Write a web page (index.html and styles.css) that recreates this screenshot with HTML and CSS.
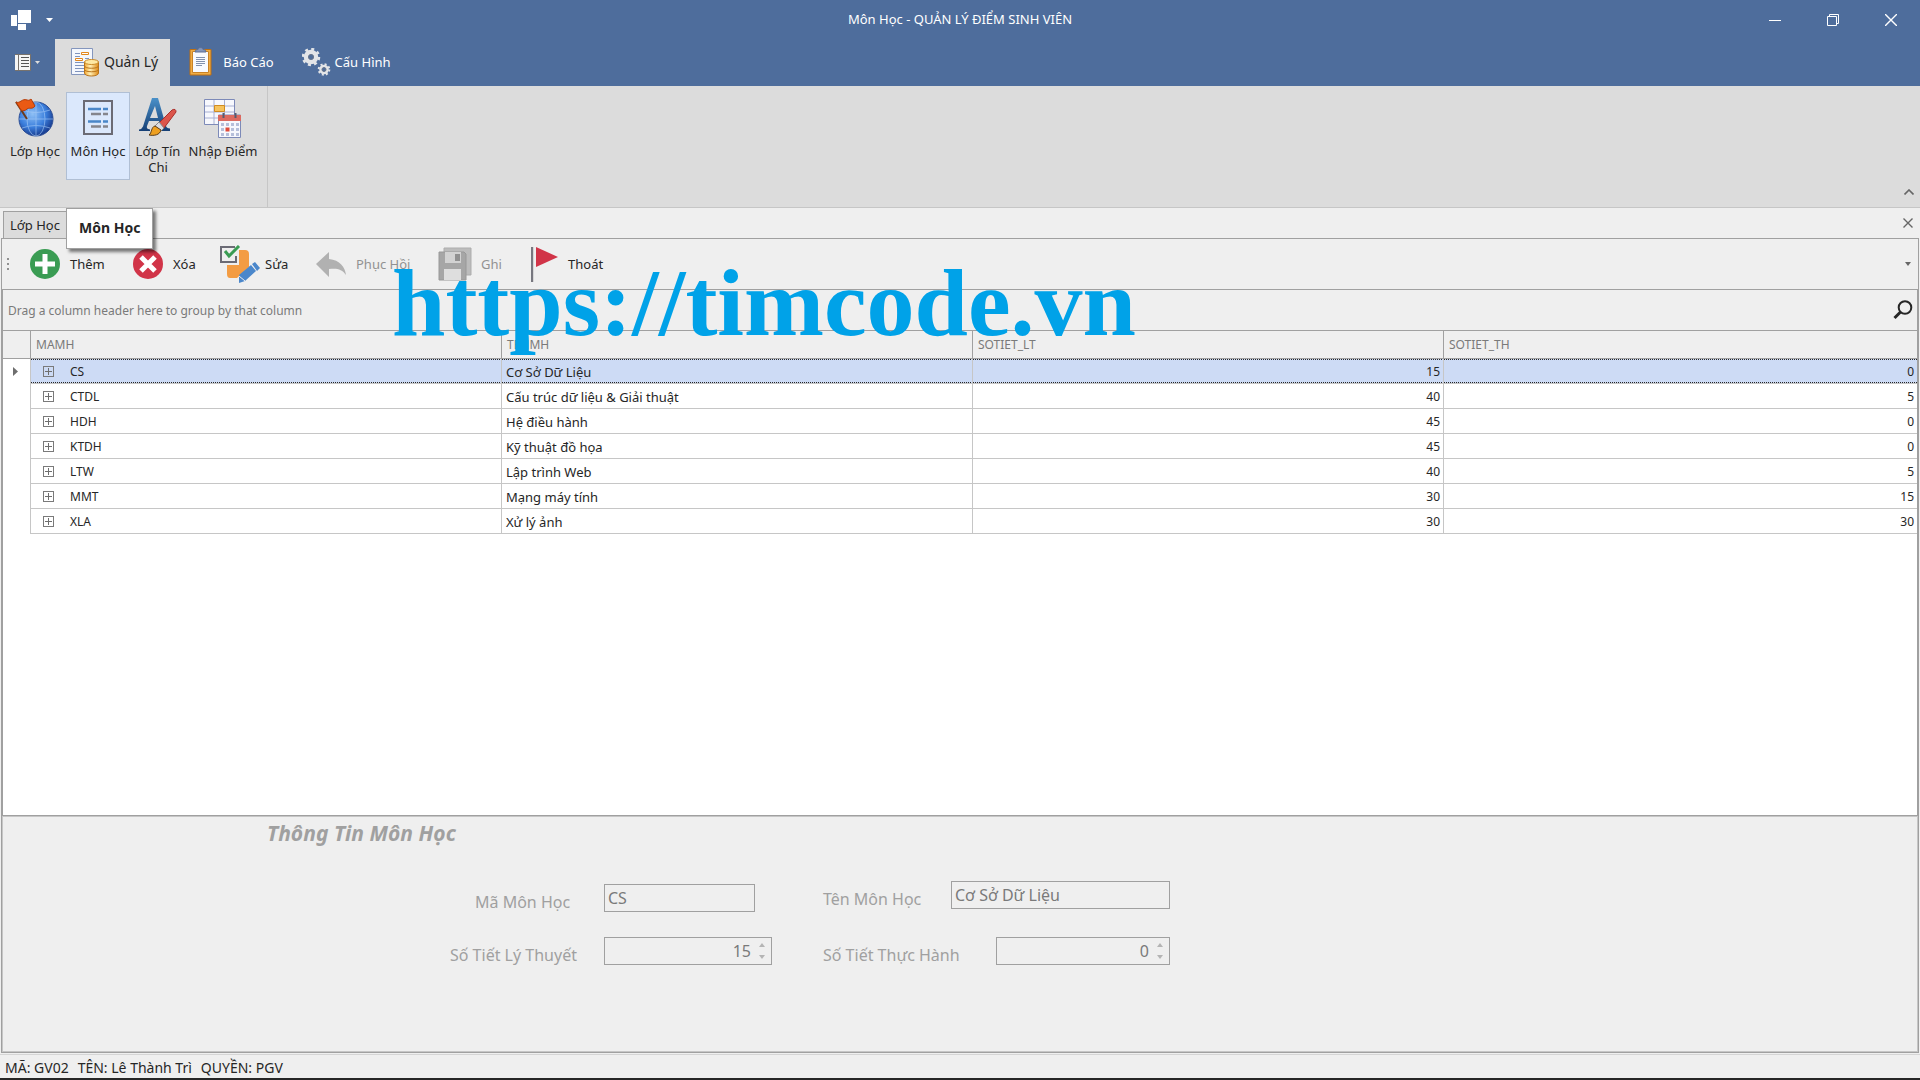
FILE: index.html
```html
<!DOCTYPE html>
<html lang="vi">
<head>
    <meta charset="UTF-8">
    <meta name="viewport" content="width=device-width, initial-scale=1.0">
    <title>Môn Học - QUẢN LÝ ĐIỂM SINH VIÊN</title>
    <link rel="stylesheet" href="styles.css">
</head>
<body>
    <!-- Title bar -->
    <header class="titlebar">
        <div class="quick-access">
            <svg class="app-logo" width="20" height="20" viewBox="0 0 20 20" fill="#fff"><path d="M0 5h6v11H0zM7 0h13v13H7zM7 14h8v6H7z"/></svg>
            <button type="button" class="icon-btn" aria-label="Customize"><svg width="7" height="4" viewBox="0 0 7 4"><path d="M0 0h7L3.500 4z" fill="#fff"/></svg></button>
        </div>
        <h1 class="window-title">Môn Học - QUẢN LÝ ĐIỂM SINH VIÊN</h1>
        <div class="window-controls">
            <button type="button" aria-label="Minimize"><svg width="12" height="12" viewBox="0 0 12 12"><path d="M0 6.500h12" stroke="#fff"/></svg></button>
            <button type="button" aria-label="Restore"><svg width="12" height="12" viewBox="0 0 12 12" fill="none" stroke="#fff"><path d="M.5 2.500h9v9h-9zM2.500 2V.5h9v9H10"/></svg></button>
            <button type="button" aria-label="Close"><svg width="12" height="12" viewBox="0 0 12 12"><path d="M0 0l12 12M12 0L0 12" stroke="#fff" stroke-width="1.400"/></svg></button>
        </div>
    </header>

    <!-- Ribbon tabs -->
    <nav class="ribbon-tabs">
        <button type="button" class="app-menu" aria-label="Menu">
            <svg width="16" height="17" viewBox="0 0 16 17"><path d="M0 0h16v17H0z" fill="#f5f5f5"/><path d="M3.500 0v17M15.500 0v17M0 .5h16M0 16.500h16" stroke="#77726d" fill="none"/><path d="M6 3.500h8M6 6.500h8M6 9.500h8M6 12.500h8" stroke="#555"/></svg>
            <svg width="5" height="3" viewBox="0 0 5 3"><path d="M0 0h5L2.500 3z" fill="#ddd"/></svg>
        </button>
        <button type="button" class="ribbon-tab active">
            <svg width="29" height="30" viewBox="0 0 29 30">
                <defs><linearGradient id="gold"><stop offset="0" stop-color="#f3a72e"/><stop offset=".4" stop-color="#fff0b8"/><stop offset="1" stop-color="#e08a12"/></linearGradient></defs>
                <path d="M.5 1.500h21v26H.5z" fill="#f4f7fd" stroke="#8496bd"/>
                <path d="M4 6.500h5M4 9.500h5M4 15.500h9M4 18.500h9M4 21.500h9M4 24.500h9M14 11.500h4" stroke="#7f93bd"/>
                <path d="M10.500 5.500h7v2h-7zM4.500 11.500h7v2h-7z" fill="#fff" stroke="#e2861c"/>
                <path d="M13.500 15v11c0 4 14 4 14 0V15z" fill="url(#gold)" stroke="#b8731b"/>
                <path d="M13.500 19c0 3 14 3 14 0M13.500 22.500c0 3 14 3 14 0" stroke="#b8731b" fill="none"/>
                <ellipse cx="20.500" cy="15" rx="7" ry="2.500" fill="#ffe9a3" stroke="#c98a2a"/>
            </svg>
            Quản Lý
        </button>
        <button type="button" class="ribbon-tab report">
            <svg width="23" height="29" viewBox="0 0 23 29">
                <path d="M1 2.500h21v25.500H1z" fill="#f0ad45" stroke="#bd6f13"/>
                <path d="M3.500 4.500h16v21h-16z" fill="#f8faff" stroke="#c98226"/>
                <path d="M6 5c0-2 2-2.500 3-2.500C9 0 14 0 14 2.500c1 0 3 .5 3 2.500z" fill="#8396bd" stroke="#5d6f96"/>
                <path d="M7 10.500h9M7 12.500h9M7 14.500h9M7 16.500h9M7 18.500h6" stroke="#8291ad"/>
            </svg>
            Báo Cáo
        </button>
        <button type="button" class="ribbon-tab config">
            <svg width="29" height="28" viewBox="0 0 29 28">
                <g fill="none" stroke="#e3e5e8">
                    <circle cx="9" cy="9" r="5" stroke-width="4.500"/>
                    <circle cx="9" cy="9" r="8" stroke-width="2.500" stroke-dasharray="3 3.280"/>
                    <circle cx="22" cy="21.500" r="3.400" stroke-width="2.800"/>
                    <circle cx="22" cy="21.500" r="5.300" stroke-width="2" stroke-dasharray="2 2.160"/>
                </g>
                <g fill="none" stroke="#68758a"><circle cx="9" cy="9" r="2.500"/><circle cx="22" cy="21.500" r="2"/></g>
            </svg>
            Cấu Hình
        </button>
    </nav>

    <!-- Ribbon -->
    <section class="ribbon">
        <div class="ribbon-group">
            <button type="button" class="ribbon-btn">
                <svg width="40" height="40" viewBox="0 0 40 40">
                    <defs><radialGradient id="globe" cx=".4" cy=".35" r=".65"><stop offset="0" stop-color="#8fc0f5"/><stop offset=".6" stop-color="#3b7fdd"/><stop offset="1" stop-color="#1a3f93"/></radialGradient></defs>
                    <circle cx="21" cy="21" r="17" fill="url(#globe)" stroke="#2a4c94"/>
                    <g fill="none" stroke="#a9cdf8" opacity=".6"><path d="M4 21h34M21 4v34M7 12q14 5 28 0M7 30q14-5 28 0"/><ellipse cx="21" cy="21" rx="9" ry="17"/></g>
                    <path d="M1 4l11 17" stroke="#6b3a1c" stroke-width="2"/>
                    <path d="M1 4c4 2 6-4 11-2 2 1 4-1 4-1l4 7c-3 4-6 1-8 3s-4 2-6 1z" fill="#ea5a14" stroke="#b43c08"/>
                </svg>
                <span>Lớp Học</span>
            </button>
            <div class="hover-wrap">
                <button type="button" class="ribbon-btn hot" aria-describedby="tip">
                    <svg width="40" height="40" viewBox="0 0 40 40">
                        <path d="M6 3h28v33H6z" fill="none" stroke="#6b6b75" stroke-width="2"/>
                        <path d="M10 11h13M25 11h5M10 23.500h13M25 23.500h5" stroke="#4a86c8" stroke-width="2.400"/>
                        <path d="M13 16h10M25 16h5M13 28.500h10M25 28.500h5" stroke="#85858c" stroke-width="2.400"/>
                    </svg>
                    <span>Môn Học</span>
                </button>
                <div class="tooltip" id="tip" role="tooltip">Môn Học</div>
            </div>
            <button type="button" class="ribbon-btn narrow">
                <svg width="40" height="40" viewBox="0 0 40 40">
                    <defs><linearGradient id="blueA" x2="0" y2="1"><stop offset="0" stop-color="#4a91c9"/><stop offset="1" stop-color="#163f75"/></linearGradient></defs>
                    <path d="M14 0h6l8 28q.5 2 4 2.500V33H19v-1.500q4 0 3-3L21 23H11l-2 5q-1 3 3 3.500V33H1v-1.500q3-.5 4-3zM12 20h8L17 8z" fill="url(#blueA)" fill-rule="evenodd"/>
                    <path d="M21 25L34 12q4-2 4 2L26 30z" fill="#dc554b" stroke="#a92e2a"/>
                    <path d="M17 28l4-4 5 6-3 3z" fill="#d9dce3" stroke="#888"/>
                    <path d="M11 37c3-2 2-8 6-9l6 4c-1 5-7 6-12 5z" fill="#eea020" stroke="#5b3d19"/>
                </svg>
                <span>Lớp Tín Chi</span>
            </button>
            <button type="button" class="ribbon-btn wide">
                <svg width="40" height="40" viewBox="0 0 40 40">
                    <path d="M1.500 1.500h30v25h-30z" fill="#f7f8fd" stroke="#7d8ab8"/>
                    <path d="M2 8h29M2 14h29M2 20h29M11 2v24M21.500 2v24" stroke="#a8b0d2" fill="none"/>
                    <path d="M11.500 7.500h10v6h-10z" fill="#f6c35c" stroke="#d08b20"/>
                    <path d="M15.500 17h22v22.500h-22z" fill="#f7f8fd" stroke="#7d8ab8"/>
                    <path d="M15 17h23v6H15z" fill="#dc6a60"/>
                    <path d="M18 25h3v3h-3zm5 0h3v3h-3zm5 0h3v3h-3zm5 0h3v3h-3zM18 30h3v3h-3zm10 0h3v3h-3zm5 0h3v3h-3zM18 35h3v3h-3zm5 0h3v3h-3zm5 0h3v3h-3zm5 0h3v3h-3z" fill="#b6bfda"/>
                    <path d="M22.500 29.500h4v4h-4z" fill="#e04b3a"/>
                    <path d="M20.500 15v5M32.500 15v5" stroke="#555c70" stroke-width="2"/>
                </svg>
                <span>Nhập Điểm</span>
            </button>
        </div>
        <button type="button" class="icon-btn collapse" aria-label="Collapse"><svg width="10" height="6" viewBox="0 0 10 6"><path d="M.5 5.500L5 1l4.500 4.500" fill="none" stroke="#666" stroke-width="1.600"/></svg></button>
    </section>

    <!-- Document tabs -->
    <div class="doc-tabs">
        <button type="button" class="doc-tab">Lớp Học</button>
        <button type="button" class="icon-btn" aria-label="Close tab"><svg width="10" height="10" viewBox="0 0 10 10"><path d="M.5.5l9 9M9.500.5l-9 9" stroke="#666" stroke-width="1.400"/></svg></button>
    </div>

    <main class="document">
        <div class="toolbar">
            <span class="grip"></span>
            <button type="button" class="tool add">
                <svg width="30" height="30" viewBox="0 0 30 30"><circle cx="15" cy="15" r="15" fill="#3a9c53"/><path d="M15 5v20M5 15h20" stroke="#fff" stroke-width="5"/></svg>
                Thêm
            </button>
            <button type="button" class="tool delete">
                <svg width="30" height="30" viewBox="0 0 30 30"><circle cx="15" cy="15" r="15" fill="#d13448"/><path d="M8 8l14 14M22 8L8 22" stroke="#fff" stroke-width="5"/></svg>
                Xóa
            </button>
            <button type="button" class="tool edit">
                <svg width="41" height="38" viewBox="0 0 41 38">
                    <path d="M20 5h6q4 0 4 4v13L18 33h-7q-3 0-3-4v-9h12z" fill="#f39c43"/>
                    <path d="M16 2H2v15h15v-6" fill="none" stroke="#6b6b75" stroke-width="2"/>
                    <path d="M6 6l4 5L20 1" fill="none" stroke="#3a9c53" stroke-width="3"/>
                    <path d="M20 30l12-10 5 6-11 10-6 2zM33 19l3-2 5 6-3 3z" fill="#4b87cb"/>
                    <path d="M20 31l6 5" stroke="#efefef"/>
                </svg>
                Sửa
            </button>
            <button type="button" class="tool undo" disabled>
                <svg width="30" height="25" viewBox="0 0 30 25"><path d="M0 12L13 0v7c11 1 16 8 17 16-4-6-9-7-17-6v8z" fill="#b1b1b1"/></svg>
                Phục Hồi
            </button>
            <button type="button" class="tool save" disabled>
                <svg width="34" height="34" viewBox="0 0 34 34">
                    <path d="M6 1h27v27H6z" fill="#bcbcbc" stroke="#adadad"/>
                    <path d="M1 5h25l2 2v26H1z" fill="#a6a6a6" stroke="#989898"/>
                    <path d="M7 5h16v11H7z" fill="#d2d2d2"/><path d="M17 7h5v7h-5z" fill="#909090"/>
                    <path d="M6 22h17v11H6z" fill="#dedede"/>
                </svg>
                Ghi
            </button>
            <button type="button" class="tool exit">
                <svg width="27" height="35" viewBox="0 0 27 35"><path d="M1 0v35" stroke="#77777f" stroke-width="2.400"/><path d="M5 0l22 10L5 20z" fill="#d13448"/></svg>
                Thoát
            </button>
            <button type="button" class="icon-btn more" aria-label="More"><svg width="6" height="4" viewBox="0 0 6 4"><path d="M0 0h6L3 4z" fill="#666"/></svg></button>
        </div>

        <!-- Subject grid -->
        <section class="grid-view">
            <div class="group-panel">
                <span>Drag a column header here to group by that column</span>
                <button type="button" class="icon-btn" aria-label="Search"><svg width="20" height="20" viewBox="0 0 20 20" fill="none" stroke="#262626"><circle cx="12" cy="7.500" r="6.300" stroke-width="2"/><path d="M7.500 12L1.500 18" stroke-width="3"/></svg></button>
            </div>
            <table class="data-grid">
                <thead>
                    <tr><th class="indicator"></th><th>MAMH</th><th>TENMH</th><th>SOTIET_LT</th><th class="last">SOTIET_TH</th></tr>
                </thead>
                <tbody>
                    <tr class="selected"><td class="indicator"><span class="row-arrow"></span></td><td><button type="button" class="expand" aria-label="Expand"></button>CS</td><td class="name">Cơ Sở Dữ Liệu</td><td class="num">15</td><td class="num">0</td></tr>
                    <tr><td class="indicator"></td><td><button type="button" class="expand" aria-label="Expand"></button>CTDL</td><td class="name">Cấu trúc dữ liệu &amp; Giải thuật</td><td class="num">40</td><td class="num">5</td></tr>
                    <tr><td class="indicator"></td><td><button type="button" class="expand" aria-label="Expand"></button>HDH</td><td class="name">Hệ điều hành</td><td class="num">45</td><td class="num">0</td></tr>
                    <tr><td class="indicator"></td><td><button type="button" class="expand" aria-label="Expand"></button>KTDH</td><td class="name">Kỹ thuật đồ họa</td><td class="num">45</td><td class="num">0</td></tr>
                    <tr><td class="indicator"></td><td><button type="button" class="expand" aria-label="Expand"></button>LTW</td><td class="name">Lập trình Web</td><td class="num">40</td><td class="num">5</td></tr>
                    <tr><td class="indicator"></td><td><button type="button" class="expand" aria-label="Expand"></button>MMT</td><td class="name">Mạng máy tính</td><td class="num">30</td><td class="num">15</td></tr>
                    <tr><td class="indicator"></td><td><button type="button" class="expand" aria-label="Expand"></button>XLA</td><td class="name">Xử lý ảnh</td><td class="num">30</td><td class="num">30</td></tr>
                </tbody>
            </table>
        </section>

        <!-- Detail form -->
        <form class="detail">
            <h2>Thông Tin Môn Học</h2>
            <div class="fields">
                <div class="field-col left">
                    <div class="field">
                        <label for="maMH" class="indent">Mã Môn Học</label>
                        <input id="maMH" class="code" type="text" value="CS" disabled>
                    </div>
                    <div class="field">
                        <label for="soTietLT">Số Tiết Lý Thuyết</label>
                        <div class="spin theory">
                            <input id="soTietLT" type="text" inputmode="numeric" value="15" disabled>
                            <span class="arrows"></span>
                        </div>
                    </div>
                </div>
                <div class="field-col right">
                    <div class="field">
                        <label for="tenMH">Tên Môn Học</label>
                        <input id="tenMH" class="subject" type="text" value="Cơ Sở Dữ Liệu" disabled>
                    </div>
                    <div class="field">
                        <label for="soTietTH">Số Tiết Thực Hành</label>
                        <div class="spin practice">
                            <input id="soTietTH" type="text" inputmode="numeric" value="0" disabled>
                            <span class="arrows"></span>
                        </div>
                    </div>
                </div>
            </div>
        </form>
    </main>

    <footer class="statusbar">
        <span>MÃ: GV02</span>
        <span>TÊN: Lê Thành Trì</span>
        <span>QUYỀN: PGV</span>
    </footer>

    <div class="watermark">https://timcode.vn</div>
</body>
</html>
```
FILE: styles.css
```css
* {
    box-sizing: border-box;
}

body {
    margin: 0;
    height: 100vh;
    display: flex;
    flex-direction: column;
    position: relative;
    overflow: hidden;
    background: #efefef;
    color: #262626;
    font-family: "Noto Sans", sans-serif;
    font-size: 13px;
    line-height: 16px;
}

button {
    margin: 0;
    padding: 0;
    border: none;
    background: none;
    color: inherit;
    font: inherit;
}

svg {
    display: block;
    flex: none;
}

.icon-btn {
    display: flex;
    align-items: center;
    justify-content: center;
    width: 24px;
    height: 24px;
}

/* Title bar */
.titlebar {
    display: grid;
    grid-template-columns: 1fr auto 1fr;
    align-items: center;
    height: 39px;
    background: #4e6d9c;
    color: #fff;
}

.quick-access {
    display: flex;
    align-items: center;
    gap: 6px;
    padding-left: 11px;
}

.window-title {
    margin: 0;
    padding-bottom: 2px;
    font-size: 13px;
    font-weight: normal;
}

.window-controls {
    display: flex;
    justify-content: flex-end;
}

.window-controls button {
    display: flex;
    align-items: center;
    justify-content: center;
    width: 58px;
    height: 38px;
}

/* Ribbon tabs */
.ribbon-tabs {
    display: flex;
    height: 47px;
    background: #4e6d9c;
    color: #fff;
}

.app-menu {
    display: flex;
    align-items: center;
    gap: 4px;
    width: 55px;
    padding-left: 15px;
}

.ribbon-tab {
    display: flex;
    align-items: center;
    gap: 4px;
    padding: 0 12px 2px 16px;
}

.ribbon-tab.active {
    background: #dcdcdc;
    color: #262626;
    font-size: 14px;
}

.ribbon-tab.report {
    gap: 11px;
    padding-left: 19px;
}

/* Ribbon */
.ribbon {
    display: flex;
    justify-content: space-between;
    height: 122px;
    background: #dcdcdc;
    border-bottom: 1px solid #c6c6c6;
}

.ribbon-group {
    display: flex;
    align-items: flex-start;
    padding: 6px 7px 0 4px;
    border-right: 1px solid #c6c6c6;
}

.ribbon-btn {
    display: flex;
    flex-direction: column;
    align-items: center;
    gap: 5px;
    width: 62px;
    height: 88px;
    padding-top: 5px;
    border: 1px solid transparent;
}

.ribbon-btn.hot {
    width: 64px;
    background: #dbe8fc;
    border-color: #b0bfd4;
}

.ribbon-btn.narrow {
    width: 56px;
}

.ribbon-btn.wide {
    width: 74px;
}

.hover-wrap {
    position: relative;
}

.tooltip {
    position: absolute;
    top: 116px;
    left: 0;
    z-index: 2;
    padding: 11px 12px 12px;
    border: 1px solid #a0a0a0;
    background: #fff;
    box-shadow: 3px 3px 3px rgba(0, 0, 0, 0.5);
    font-size: 14px;
    font-weight: bold;
    white-space: nowrap;
}

.collapse {
    align-self: flex-end;
    margin: 0 -1px 3px 0;
}

/* Document tabs */
.doc-tabs {
    display: flex;
    justify-content: space-between;
    align-items: center;
    height: 30px;
    padding-left: 3px;
}

.doc-tab {
    align-self: flex-end;
    width: 70px;
    height: 27px;
    padding: 0 6px;
    border: 1px solid #a0a0a0;
    border-bottom: none;
    background: #dcdcdc;
    text-align: left;
    white-space: nowrap;
}

/* Document */
.document {
    flex: 1;
    display: flex;
    flex-direction: column;
    margin: 0 1px;
    border: 1px solid #a0a0a0;
}

.toolbar {
    display: flex;
    align-items: center;
    height: 51px;
    border-bottom: 1px solid #a0a0a0;
}

.grip {
    width: 2px;
    height: 12px;
    margin: 0 21px 0 5px;
    background: repeating-linear-gradient(#909090 0 2px, transparent 2px 5px);
}

.tool {
    display: flex;
    align-items: center;
    gap: 10px;
    height: 40px;
}

.tool:disabled {
    color: #929292;
}

.add {
    width: 103px;
}

.delete {
    width: 86px;
}

.edit {
    width: 97px;
    gap: 5px;
}

.undo {
    width: 122px;
}

.save {
    width: 93px;
    gap: 9px;
}

.more {
    width: 20px;
    margin-left: auto;
}

/* Grid */
.grid-view {
    flex: 1;
    border: solid #a0a0a0;
    border-width: 0 1px 1px;
    background: #fff;
}

.group-panel {
    display: flex;
    align-items: center;
    justify-content: space-between;
    height: 41px;
    padding: 0 2px 0 5px;
    border-bottom: 1px solid #a0a0a0;
    background: #efefef;
    color: #7a7a7a;
    font-size: 12px;
}

.group-panel span {
    padding-top: 2px;
}

.data-grid {
    width: 100%;
    table-layout: fixed;
    border-collapse: separate;
    border-spacing: 0;
    font-size: 12px;
}

.data-grid th {
    width: 471px;
    height: 28px;
    padding: 0 5px;
    border-right: 1px solid #a0a0a0;
    border-bottom: 1px solid #a0a0a0;
    background: #efefef;
    color: #7a7a7a;
    font-weight: normal;
    text-align: left;
}

.data-grid th.last {
    width: auto;
}

.data-grid td {
    height: 25px;
    padding: 2px 3px 0 4px;
    border-right: 1px solid #c6c6c6;
    border-bottom: 1px solid #c6c6c6;
}

.data-grid .indicator {
    width: 28px;
    padding: 0;
}

.data-grid td.indicator {
    border-bottom: none;
}

.data-grid th:last-child,
.data-grid td:last-child {
    border-right: none;
}

.data-grid .name {
    font-size: 13px;
}

.data-grid .num {
    text-align: right;
}

.selected td:not(.indicator) {
    background: #cddbf5;
    background-image:
        repeating-linear-gradient(90deg, #262626 0 1px, transparent 1px 2px),
        repeating-linear-gradient(90deg, #262626 0 1px, transparent 1px 2px);
    background-size: 100% 1px;
    background-position: top, bottom;
    background-repeat: no-repeat;
}

.row-arrow {
    display: block;
    width: 5px;
    height: 9px;
    margin-left: 10px;
    background: #6e6e6e;
    clip-path: polygon(0 0, 100% 50%, 0 100%);
}

.expand {
    width: 11px;
    height: 11px;
    margin: 0 16px 0 8px;
    border: 1px solid #7a7a7a;
    background:
        linear-gradient(#6e6e6e, #6e6e6e) center / 7px 1px no-repeat,
        linear-gradient(#6e6e6e, #6e6e6e) center / 1px 7px no-repeat;
}

/* Detail form */
.detail {
    height: 236px;
    border: 1px solid #c6c6c6;
    color: #a0a0a0;
    font-size: 16px;
}

.detail h2 {
    margin: 4px 0 0 264px;
    font-size: 21px;
    line-height: 24px;
    font-style: italic;
}

.fields {
    display: flex;
    align-items: flex-end;
    gap: 51px;
    padding: 36px 0 0 447px;
}

.field-col {
    display: flex;
    flex-direction: column;
}

.field-col.left {
    width: 322px;
    gap: 25px;
}

.field-col.right {
    width: 347px;
    gap: 28px;
}

.field {
    display: flex;
    align-items: center;
    height: 28px;
}

.field label {
    flex: 1;
    padding-top: 7px;
    white-space: nowrap;
}

.field .indent {
    padding-left: 25px;
}

.field input {
    height: 28px;
    padding: 0 3px;
    border: 1px solid #a0a0a0;
    background: transparent;
    color: #7a7a7a;
    font: inherit;
}

.code {
    width: 151px;
    margin-right: 17px;
}

.subject {
    width: 219px;
}

.spin {
    display: flex;
    align-items: center;
    height: 28px;
    border: 1px solid #a0a0a0;
}

.spin input {
    flex: 1;
    min-width: 0;
    border: none;
    text-align: right;
}

.theory {
    width: 168px;
}

.practice {
    width: 174px;
}

.arrows {
    width: 6px;
    height: 16px;
    margin: 0 6px 0 5px;
    background: #b4b4b4;
    clip-path: polygon(50% 0, 100% 4px, 0 4px, 50% 0, 50% 100%, 0 12px, 100% 12px, 50% 100%);
}

/* Status bar */
.statusbar {
    display: flex;
    align-items: center;
    gap: 9px;
    height: 26px;
    margin-top: 1px;
    padding: 2px 5px 0;
    border-top: 1px solid #d5d5d5;
    border-bottom: 2px solid #262626;
    font-size: 14px;
}

.watermark {
    position: absolute;
    top: 248px;
    left: 392px;
    z-index: 1;
    color: #00a2e8;
    font-family: "Liberation Serif", serif;
    font-size: 96px;
    line-height: 110px;
    font-weight: bold;
    pointer-events: none;
}
```
